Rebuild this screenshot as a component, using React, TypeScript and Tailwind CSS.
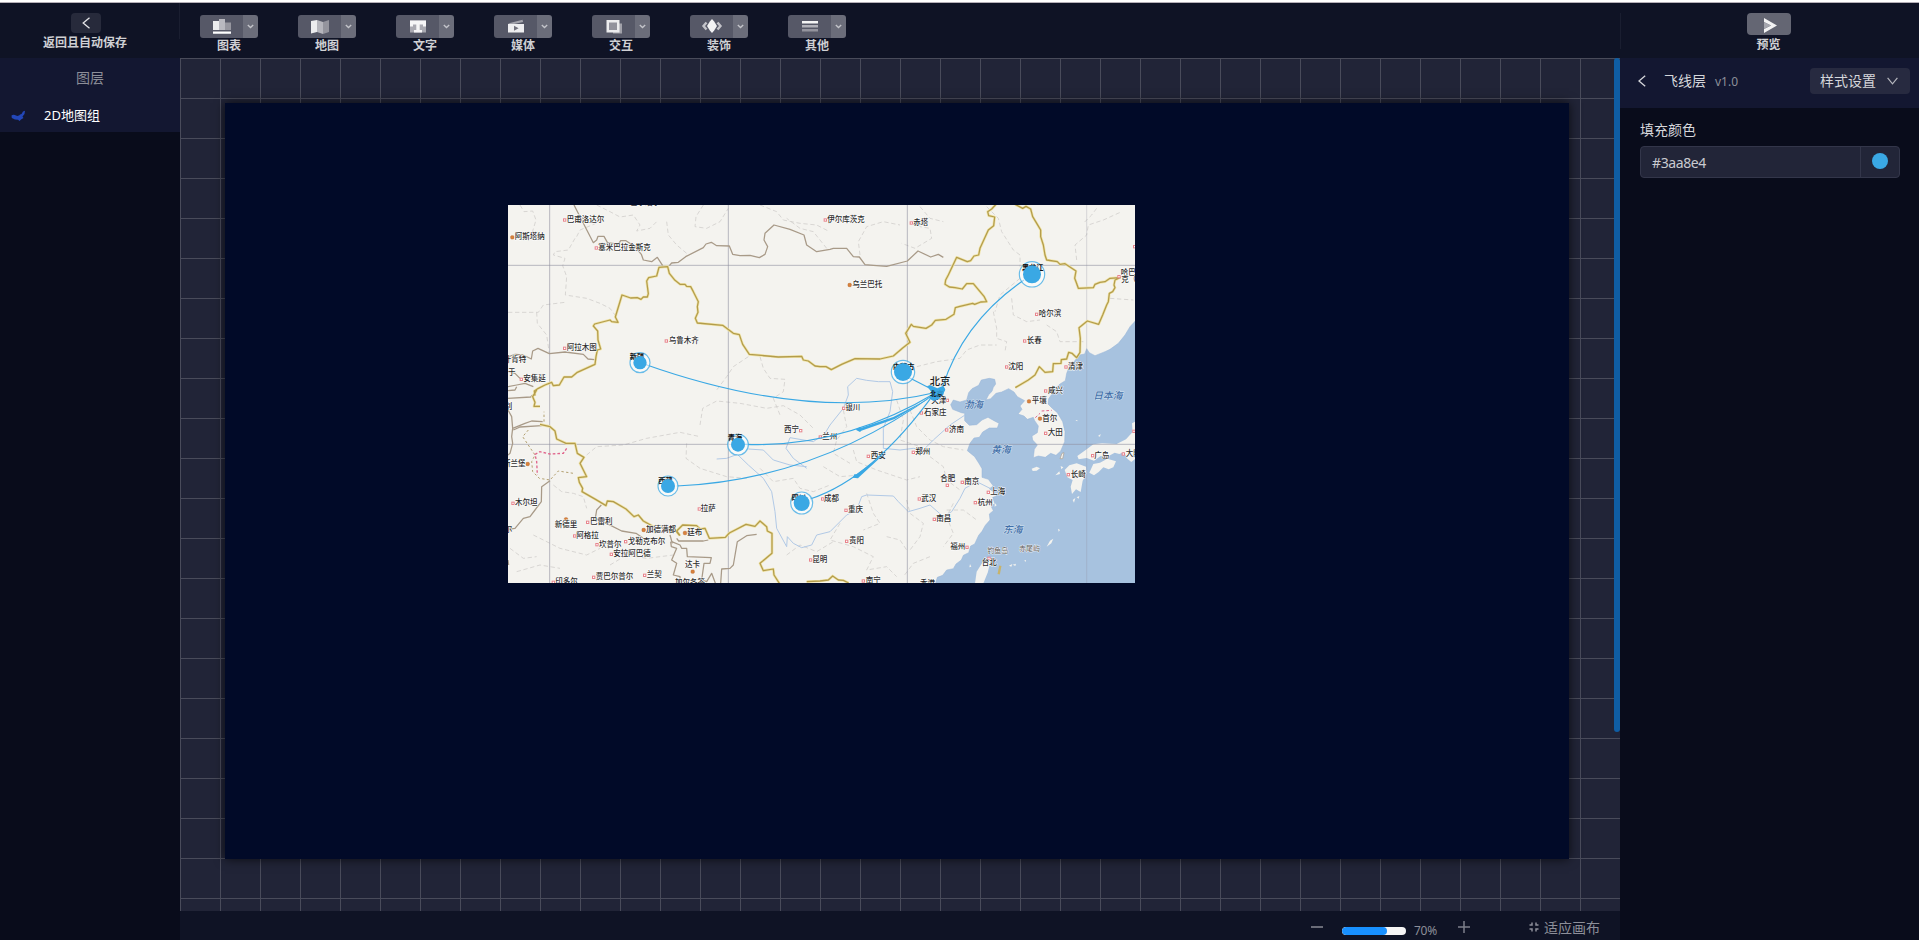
import React from "react";

type Label = [number, number, string];

const ORIGIN_B = "translate(960 0)";
const ORIGIN_C = "translate(0 585)";
const ORIGIN_D = "translate(960 585)";

const CJK = "font-['Noto_Sans','Noto_Sans_CJK_SC',sans-serif]";

const City = ({ x, y, color = "#e8848c", solid = false }: { x: number; y: number; color?: string; solid?: boolean }) =>
  solid ? (
    <rect x={x - 5} y={y - 5} width="10" height="10" rx="3" fill="#d9823c" stroke="#b8662a" strokeWidth="1.5" />
  ) : (
    <rect x={x - 3.5} y={y - 3.5} width="7" height="7" fill="#fff" stroke={color} strokeWidth="3" />
  );

const Labels = ({ items, size = 22.5 }: { items: Label[]; size?: number }) => (
  <g fontSize={size} fill="#2c2c2c" stroke="#ffffff" strokeWidth="3" paintOrder="stroke" strokeLinejoin="round" fontWeight="500">
    {items.map(([x, y, t]) => (
      <text key={t + x} x={x} y={y + 8}>{t}</text>
    ))}
  </g>
);

const Cities = ({ pts }: { pts: [number, number][] }) => (
  <g>{pts.map(([x, y]) => <City key={`${x}-${y}`} x={x} y={y} />)}</g>
);

const Node = ({ x, y, r, ring, name, tx, ty }: { x: number; y: number; r: number; ring: number; name: string; tx: number; ty: number }) => (
  <g>
    <circle cx={x} cy={y} r={ring} fill="#ffffff" fillOpacity=".55" stroke="#3aa8e4" strokeOpacity=".75" strokeWidth="3.5" />
    <text x={tx} y={ty} fontSize="21.5" fontWeight="700" fill="#111" textAnchor="middle">{name}</text>
    <circle cx={x} cy={y} r={r} fill="#3aa8e4" />
  </g>
);

const SEA =
  "M946,-207 L930,-190 915,-165 895,-140 870,-122 855,-115 825,-103 808,-112 800,-124 794,-108 778,-105 762,-85 748,-70 740,-50 736,-28 720,-18 706,-5 696,12 686,26 684,42 698,56 712,68 728,95 735,125 734,155 722,183 708,196 692,190 676,202 655,198 640,203 643,178 652,165 638,150 636,138 652,128 655,108 644,92 640,82 622,88 612,78 594,72 606,58 600,48 614,32 592,20 582,6 566,-4 545,6 528,10 512,26 498,30 506,14 516,4 520,-8 527,-18 524,-32 508,-35 484,-30 476,-14 456,-4 446,8 440,30 420,36 400,30 392,44 398,58 424,68 434,70 434,92 448,106 470,104 486,90 504,82 522,92 537,100 532,114 508,114 488,126 478,142 462,144 450,160 442,182 464,200 478,222 486,236 486,262 505,268 520,288 508,296 524,308 530,318 518,322 524,340 514,350 520,362 508,372 510,390 496,406 486,424 476,436 464,462 452,468 446,488 430,496 424,510 408,522 400,536 380,540 368,556 352,562 346,582 946,582Z";

const ChinaMap = () => (
  <svg className={`block ${CJK}`} width="627" height="378" viewBox="24 30 1881 1134">
    <rect x="0" y="0" width="1960" height="1200" fill="#f4f3ef" />

    <g transform={ORIGIN_D} strokeLinejoin="round">
      <path d={SEA} fill="#a7c2df" stroke="#94b3d6" strokeWidth="1.5" />
      <g fill="#f4f3ef">
        <path d="M946,95 L936,100 938,126 918,148 890,162 846,160 820,163 800,178 772,198 776,208 800,204 822,212 842,198 862,200 884,188 898,192 912,186 922,206 934,216 946,206Z" />
        <path d="M808,248 L820,222 840,218 862,206 888,214 880,232 866,238 850,232 836,246 822,256Z" />
        <path d="M734,240 L748,226 770,220 798,230 799,252 788,272 782,306 768,298 756,312 752,290 758,270 742,262Z" />
        <path d="M510,503 L490,513 470,545 465,580 490,580 503,548 511,516Z" />
        <path d="M635,236 L650,230 660,235 650,242 638,243Z" />
        <path d="M680,470 L690,452 700,446 694,460Z M567,527 L577,522 574,530Z M578,524 L588,521 586,528Z M612,512 l6,-2 0,5z M714,416 l6,4 -4,5z M834,138 l8,-6 -2,8z M766,90 l6,0 0,4z M706,256 l12,-12 2,8z M722,228 l8,4 -6,6z M758,330 l8,-6 -4,14z M770,322 l8,-4 -2,8z M450,522 l4,8 -6,2z M524,338 l6,8 -6,4z" />
        <path d="M720,206 L726,190 732,188 728,206Z" stroke="#a89c8c" strokeWidth="2" />
      </g>
    </g>

    <g fill="none" stroke="#d0cecb" strokeWidth="2.4" strokeDasharray="13 8" strokeLinejoin="round">
      <path d="M60,30 L72,50 98,48 108,75 96,115 M290,30 L330,50 360,66 400,60 420,90 410,108 450,100 470,80 M610,30 L588,65 585,95 620,100 660,80 685,40" />
      <path d="M230,125 L240,105 300,80 M225,130 L205,165 165,170 160,180 195,190 188,212 200,245 196,300 260,310 300,325 330,340 345,360 M24,352 L115,352 130,330 195,322 M110,352 L112,385 140,420 148,475" />
      <path d="M500,80 L505,120 530,150 560,175 M780,30 L830,50 850,75 900,85 950,90 985,108 M745,485 L700,515 680,545 650,585 M780,485 L790,520 810,550 855,553 850,590 820,610 840,660" />
      <path d="M600,690 L608,640 650,618 720,625 800,640 850,632 900,660 940,700 M260,780 L290,755 370,750 440,730 540,712 600,725 M560,745 L558,790 600,820 680,845 740,850" />
      <path d="M160,870 L185,890 220,895 250,905 260,940 M100,1020 L180,1060 260,1080 300,1060 M50,1130 L120,1110 180,1120 M330,1110 L380,1080 440,1090 520,1080 M30,1060 L70,1090 110,1085" />
      <path d="M780,820 L820,860 880,850 900,880 940,890 990,870 M860,1080 L900,1050 950,1070 1000,1040" />
    </g>
    <g transform={ORIGIN_B} fill="none" stroke="#d0cecb" strokeWidth="2.4" strokeDasharray="13 8" strokeLinejoin="round">
      <path d="M120,180 L115,140 140,95 190,80 240,90 M280,75 L300,95 330,100 335,130 285,160 245,145 M300,35 L330,70 370,80 M500,35 L535,70 545,110 580,165 600,180 600,215 M600,250 L540,300 525,350 M575,310 L580,360 620,380 660,375 M520,350 L530,400 530,430 560,440 555,470 M680,390 L710,410 720,440 790,440 M770,195 L765,150 800,120 805,90 850,75 905,50 M870,310 L940,315 M270,520 L350,500 420,490 440,465 480,450 530,450" />
      <path d="M830,40 L815,60 790,85 M20,160 L-20,110 -60,100 -100,70" />
    </g>
    <g transform={ORIGIN_D} fill="none" stroke="#d0cecb" strokeWidth="2.4" strokeDasharray="13 8" strokeLinejoin="round">
      <path d="M70,60 L80,110 50,150 40,190 90,220 M100,180 L110,215 170,240 200,250 260,270 300,260 M230,30 L250,90 240,150 300,170 M270,60 L290,110 330,150 370,170 430,180 M330,200 L370,230 380,270 420,300 M10,230 L60,260 120,255 M260,330 L270,370 310,400 300,440 270,480 M400,340 L380,380 400,430 370,470 M140,310 L160,370 180,400 130,420 M60,400 L30,450 100,470 160,500 140,540 200,530 230,560 M330,500 L280,520 250,560 M200,440 L240,450 260,480 M380,360 L430,360 470,390" />
    </g>

    <g fill="none" stroke="#b1c9e6" strokeWidth="3" strokeLinejoin="round">
      <path d="M650,792 L680,790 712,778 745,810 790,850 815,890 825,950 830,1000 860,1055 862,1025 880,1045 905,1058 935,1050 950,1020 990,1010 1040,960 1070,945 1085,905 1100,900 1180,903 1195,920 1225,950 1260,940 1290,930 1330,965 1355,950 1380,910 1395,880 1430,860 1470,880 1500,900" />
      <path d="M745,762 L790,765 820,795 870,810 920,815 M920,820 L880,790 858,760 870,728 940,740 975,715 990,690 1030,640 1045,600 1043,575 1070,550 1100,556 1135,560 1170,560 1178,590 1170,650 1150,700 1150,760 1200,765 1240,760 1270,765 1300,735 1350,690 1395,660" />
    </g>

    <g stroke="#8f8f9e" strokeOpacity=".6" strokeWidth="3">
      <path d="M149,30V1164M685,30V1164M1222,30V1164M24,211H1905M24,748H1905" />
      <path d="M1760,30V1164" strokeOpacity=".3" />
    </g>

    <g fill="none" stroke="#a89a88" strokeWidth="3.8" strokeLinejoin="round">
      <path d="M222,30 L280,143 290,135 294,124 312,124 322,142 355,148 362,137 378,137 405,155 424,178 430,195 455,200 472,187 488,212 M508,212 L515,204 535,202 557,185 610,158 618,147 634,142 650,152 688,153 698,178 720,182 750,181 778,188 795,178 803,155 792,135 795,115 822,90 870,103 912,120 920,150 950,170 990,163 1000,160 1040,160 1060,185 1078,186 1095,209 1120,211 1160,214 1222,198 1254,168 1292,186 1315,178 1330,187" />
      <path d="M24,486 L45,478 70,480 94,492 98,468 114,460 148,476 195,471 250,478 264,492 284,494 M24,575 L50,570 75,565 100,575 M24,587 L45,585 50,575 M24,610 L92,606 98,600 M24,530 L45,535 60,550" />
      <path d="M24,645 L35,665 38,700 75,685 95,678 128,680 M40,705 L60,696 125,692 M38,700 L35,725 38,745 30,775 24,780 M150,857 L125,875 124,920 105,945 90,965 70,970 45,1000 24,1003 M304,930 L290,945 286,970 320,985 365,1008 408,1015 430,1030 M510,1020 L517,1045 M530,1030 L536,1038 610,1038 625,1035" />
      <path d="M515,1040 L540,1050 545,1060 560,1060 562,1085 634,1088 630,1105 612,1105 605,1155 620,1160 635,1135 650,1175 M512,1040 L514,1055 530,1060 515,1095 530,1105 520,1140 540,1145 540,1170 M770,1018 L740,1022 712,1040 700,1110 690,1120 665,1122 662,1165" />
      <path d="M24,1095 L26,1110" />
    </g>
    <path d="M132,680 V650 M85,705 L68,725 105,780 95,800 98,830 118,850 150,855 175,828 220,835" fill="none" stroke="#b3a070" strokeWidth="3" strokeDasharray="7 7" />
    <path d="M200,760 L190,775 150,777 120,770 105,778 110,800 112,840" fill="none" stroke="#e0668c" strokeWidth="4" strokeDasharray="8 6" />
    <path d="M1606,668 L1620,655 M1625,648 L1655,646" fill="none" stroke="#e0668c" strokeWidth="3" strokeDasharray="8 6" />

    {[{ c: "#f0e4a8", w: 8 }, { c: "#b39c4c", w: 3.8 }].map(({ c, w }) => (
      <g key={c} fill="none" stroke={c} strokeWidth={w} strokeLinejoin="round">
        <path d="M105,602 L103,588 115,580 135,570 155,562 160,572 178,570 192,546 215,546 232,532 285,508 288,485 292,465 302,462 294,435 293,408 280,393 284,387 330,375 335,380 354,382 346,366 366,300 392,309 412,308 423,313 430,306 442,306 445,296 440,258 446,248 470,243 477,217 503,215 508,235 525,256 540,268 555,268 560,274 572,275 580,290 595,320 592,335 594,352 586,370 592,384 668,391 700,415 718,419 728,448 748,478 835,486 905,484 910,495 925,498 945,513 960,515 978,515 994,524 1025,508 1065,491 1140,492 1180,483 1208,459 1230,442 1217,415 1234,388 1240,394 1278,400 1295,390 1306,376 1338,373 1362,358 1366,338 1380,334 1418,325 1424,328 1442,321 1460,320 1452,304 1420,266 1400,266 1387,282 1365,278 1348,276 1335,268 1337,255 1345,240 1370,187 1402,200 1412,197 1422,183 1436,180 1440,160 1465,105 1481,92 1484,66 1466,62 1463,50 1475,42 1488,28" />
        <path d="M1545,28 L1568,40 1578,34 1592,42 1598,65 1612,88 1622,105 1622,125 1630,150 1635,180 1640,195 1672,200 1680,208 1695,206 1728,228 1724,250 1728,260 1735,280 1780,278 1785,268 1800,262 1815,260 1830,250 1860,248 1845,255 1842,270 1845,278 1838,290 1828,295 1825,320 1820,330 1808,360 1796,388 1762,378 1737,398 1741,430 1740,472 1730,488 1716,475 1706,472 1700,492 1684,494 1683,505 1660,506 1658,530 1635,532 1618,515 1605,540 1585,555 1546,578" />
        <path d="M110,585 L98,605 105,622 102,634 120,634 M120,688 L150,695 165,708 170,732 198,745 225,745 232,775 252,787 240,805 260,845 235,848 238,862 248,880 246,890 288,914 318,932 322,918 340,920 378,942 402,965 415,960 430,978 460,995 500,998 522,1000 538,1020" />
        <path d="M540,1022 L530,1008 548,990 590,992 600,1002 615,1000 628,1030 676,1027 688,1014 738,988 765,994 780,978 800,995 802,1008 816,1015 816,1075 780,1105 790,1127 820,1122 822,1140 838,1165" />
        <path d="M920,1160 L960,1158 985,1155 998,1143 1015,1155 1030,1156 1046,1164" />
      </g>
    ))}
    <path d="M1496,1138 L1501,1112" stroke="#c7b36b" strokeWidth="7" />

    <Cities pts={[[194, 75], [289, 159], [194, 460], [499, 438], [64, 553]]} />
    <City x={37} y={127} solid />
    <Labels items={[[200, 73, "巴甫洛达尔"], [44, 125, "阿斯塔纳"], [295, 157, "塞米巴拉金斯克"], [200, 457, "阿拉木图"], [506, 436, "乌鲁木齐"], [11, 492, "什肯特"], [24, 533, "于"], [70, 551, "安集延"], [390, 22, "巴尔瑙尔"]]} />

    <g transform={ORIGIN_B}>
      <Cities pts={[[16, 75], [274, 84], [650, 358], [614, 438], [560, 516], [738, 516], [897, 245], [677, 588], [944, 155]]} />
      <City x={89} y={270} solid />
      <Labels items={[[22, 73, "伊尔库茨克"], [280, 82, "赤塔"], [97, 268, "乌兰巴托"], [656, 356, "哈尔滨"], [620, 436, "长春"], [565, 514, "沈阳"], [744, 514, "清津"], [902, 231, "哈巴"], [904, 254, "克（"], [684, 585, "咸兴"]]} />
    </g>

    <g transform={ORIGIN_C}>
      <Cities pts={[[902, 122], [961, 141], [39, 340], [263, 397], [224, 438], [291, 464], [377, 455], [334, 493], [281, 562], [434, 556], [598, 357], [968, 327], [932, 510], [160, 577]]} />
      <City x={83} y={222} solid />
      <City x={198} y={388} solid />
      <City x={431} y={420} solid />
      <City x={555} y={429} solid />
      <City x={578} y={545} solid />
      <Labels items={[[852, 119, "西宁"], [14, 48, "别"], [9, 219, "斯兰堡"], [45, 337, "木尔坦"], [164, 403, "新德里"], [270, 394, "巴雷利"], [229, 436, "阿格拉"], [297, 462, "坎普尔"], [383, 453, "戈勒克布尔"], [340, 491, "安拉阿巴德"], [438, 418, "加德满都"], [562, 427, "廷布"], [555, 524, "达卡"], [287, 560, "贾巴尔普尔"], [440, 554, "兰契"], [166, 574, "印多尔"], [525, 577, "加尔各答"], [602, 355, "拉萨"], [937, 508, "昆明"], [14, 418, "尔"]]} />
    </g>

    <g transform={ORIGIN_D}>
      <Cities pts={[[71, 55], [382, 31], [304, 69], [380, 120], [145, 199], [280, 187], [382, 286], [427, 277], [505, 307], [466, 338], [298, 327], [78, 361], [343, 388], [80, 454], [441, 472], [130, 573], [507, 505], [677, 130], [818, 197], [910, 192], [745, 254], [942, 124]]} />
      <City x={627} y={34} solid />
      <City x={660} y={86} solid />
      <Labels items={[[76, 52, "银川"], [334, 30, "天津"], [312, 68, "石家庄"], [387, 117, "济南"], [7, 138, "兰州"], [152, 197, "西安"], [286, 184, "郑州"], [361, 266, "合肥"], [433, 275, "南京"], [511, 305, "上海"], [473, 336, "杭州"], [304, 325, "武汉"], [12, 325, "成都"], [84, 359, "重庆"], [349, 386, "南昌"], [87, 451, "贵阳"], [391, 470, "福州"], [137, 570, "南宁"], [300, 580, "香港"], [485, 518, "台北"], [635, 31, "平壤"], [667, 84, "首尔"], [683, 128, "大田"], [823, 195, "广岛"], [917, 190, "大阪"], [752, 252, "长崎"]]} />
      <g fill="#555" stroke="#fff" strokeWidth="2" paintOrder="stroke" fontSize="21">
        <text x="502" y="488">钓鱼岛</text>
        <text x="597" y="484">赤尾屿</text>
      </g>
      <g fill="#3f6fa9" stroke="#d5e2f0" strokeWidth="2.5" paintOrder="stroke" fontSize="29" fontStyle="italic" fontWeight="500">
        <text x="431" y="53">渤海</text>
        <text x="514" y="188">黄海</text>
        <text x="549" y="428">东海</text>
        <text x="820" y="27">日本海</text>
      </g>
    </g>

    <g fill="none" stroke="#3aa8e4" strokeWidth="3.3">
      <path d="M430,506 Q930,684 1310,592" />
      <path d="M735,748 Q1030,760 1310,592" />
      <path d="M530,873 Q950,855 1310,592" />
      <path d="M930,912 Q1120,850 1305,592" />
      <path d="M1572,255 Q1390,380 1328,575" />
      <path d="M1228,548 L1310,590" />
    </g>
    <g fill="#3aa8e4">
      <path d="M1067,704 L1080,696 1082,699 1180,666 1292,608 1184,672 1084,707 1080,711Z" />
      <path d="M1058,848 L1063,838 1070,838 1155,775 1080,844 1074,850Z" />
    </g>
    <text x="1289" y="569" fontSize="31" fill="#1c1c1c" fontWeight="500">北京</text>
    <path d="M1281,574 L1290,570 1312,580 1330,572 1336,584 1328,600 1316,612 1300,618 1288,610 1296,598 1292,588Z" fill="#3aa8e4" />
    <text x="1290" y="603" fontSize="20" fill="#111" fontWeight="700">北京</text>
    <path d="M1300,584 L1334,578 1330,600 1308,594Z" fill="#3aa8e4" opacity=".85" />

    <Node x={420} y={503} r={20} ring={30} name="新疆" tx={411} ty={493} />
    <Node x={1596} y={238} r={27} ring={38} name="黑龙江" tx={1598} ty={226} />
    <Node x={1209} y={531} r={27} ring={35} name="内蒙古" tx={1211} ty={522} />
    <Node x={714} y={749} r={21} ring={31} name="青海" tx={705} ty={736} />
    <Node x={504} y={873} r={21} ring={30} name="西藏" tx={496} ty={864} />
    <Node x={905} y={924} r={24} ring={33} name="四川" tx={896} ty={915} />
  </svg>
);

const toolIcons: Record<string, React.ReactNode> = {
  图表: (
    <g>
      <path d="M0 2h6v9H0z" fill="#ececee" />
      <path d="M6 0h6v11H6z" fill="#b9b9c0" />
      <path d="M12 3.500h6v7.500h-6z" fill="#96969f" />
      <path d="M0 12.500h18v2.200H0z" fill="#fff" />
    </g>
  ),
  地图: (
    <g>
      <path d="M0 2l6-1v12l-6 1.500z" fill="#ececee" />
      <path d="M6 1l6 2v12l-6-2z" fill="#b5b5bc" />
      <path d="M12 3l6-2v12l-6 2z" fill="#94949d" />
    </g>
  ),
  文字: (
    <g>
      <path d="M1 1.500h16v12H1z" fill="#a9a9b1" />
      <path d="M1 1.500h16v6h-3V5.500h-3.300v5.500H13v2.500H5V11h2.300V5.500H4v2H1z" fill="#f6f6f7" />
    </g>
  ),
  媒体: (
    <g>
      <path d="M1 4.500L15.500.8l.6 2.200L5 5.500z" fill="#a5a5ad" />
      <path d="M1 5h16V13.500H1z" fill="#eeeef0" />
      <path d="M7 6.800l4.600 2.500L7 11.800z" fill="#73737e" />
    </g>
  ),
  交互: (
    <g>
      <path d="M8 4.500h9V14.500H8z" fill="#a2a2aa" />
      <path d="M1.500 1h13v12.500h-13z" fill="#ececee" />
      <path d="M4 3.500h8v7.500H4z" fill="#92929c" />
    </g>
  ),
  装饰: (
    <g>
      <path d="M3.500 3.500L.5 7l3 3.500M14.500 3.500l3 3.500-3 3.500" fill="none" stroke="#c3c3c9" strokeWidth="2.400" />
      <path d="M9 0l2.200 2.500L14 7l-2.800 4.500L9 14l-2.200-2.500L4 7l2.800-4.500z" fill="#f2f2f3" />
    </g>
  ),
  其他: (
    <g>
      <path d="M1 2h16v2.500H1z" fill="#f4f4f5" />
      <path d="M1 6h16v2.500H1z" fill="#b0b0b8" />
      <path d="M1 10h16v2.500H1z" fill="#93939d" />
    </g>
  ),
};

const ToolButton = ({ name }: { name: string }) => (
  <div className="flex w-[58px] flex-col items-center">
    <div className="flex h-[23px] w-full overflow-hidden rounded-[3px]">
      <div className="flex w-[43px] items-center justify-center bg-[#565867]">
        <svg width="18" height="15" viewBox="0 0 18 15" className={name === "装饰" ? "w-5 overflow-visible" : "overflow-visible"}>{toolIcons[name]}</svg>
      </div>
      <div className="flex w-[15px] items-center justify-center bg-[#6b6d7a]">
        <svg width="7" height="5" viewBox="0 0 7 5" fill="none" stroke="#c3c4ca" strokeWidth="1.400"><path d="M.8 1l2.700 2.500L6.200 1" /></svg>
      </div>
    </div>
    <span className="mt-px text-xs font-bold leading-[14px] text-[#cfd0d4]">{name}</span>
  </div>
);

const Header = () => (
  <header className="flex h-[55px] shrink-0 bg-[#0f1325]">
    <div className="flex w-[179px] shrink-0 flex-col items-center pr-[7px] pt-[10px]">
      <button className="flex h-5 w-[30px] items-center justify-center rounded-sm bg-[#272a3b]">
        <svg width="8" height="12" viewBox="0 0 8 12" fill="none" stroke="#e4e4e7" strokeWidth="1.300"><path d="M7.500.8L1.200 6l6.300 5.200" /></svg>
      </button>
      <span className="mr-0.5 mt-[3px] text-xs font-bold leading-[14px] text-[#cfd0d4]">返回且自动保存</span>
    </div>
    <div className="h-9 w-px bg-[#1a1e30]" />
    <nav className="flex flex-1 gap-10 pl-5 pt-3">
      {Object.keys(toolIcons).map((n) => <ToolButton key={n} name={n} />)}
    </nav>
    <div className="mt-[10px] h-9 w-px bg-[#1a1e30]" />
    <div className="flex w-[298px] shrink-0 flex-col items-center pr-[3px] pt-[10px]">
      <button className="flex h-[22px] w-11 items-center justify-center rounded-sm bg-[#646673]">
        <svg width="14" height="15" viewBox="0 0 14 15" className="mt-0.5 ml-0.5"><path d="M1 0l13 7.500L1 15v-4l7-3.500L1 4z" fill="#f2f2f3" /><path d="M1 4l7 3.500L1 11z" fill="#a5a6ae" /></svg>
      </button>
      <span className="mt-[3px] text-xs font-bold leading-[14px] text-[#cfd0d4]">预览</span>
    </div>
  </header>
);

const LayerPanel = () => (
  <aside className="w-[180px] shrink-0">
    <div className="flex h-10 items-center justify-center bg-[#131731] text-sm text-[#8d8f99]">图层</div>
    <div className="flex h-[34px] items-center bg-[#131731] pl-[11px] pt-0.5 text-[13px] text-white">
      <svg width="15" height="12" viewBox="0 0 15 12" className="mr-[18px]">
        <path d="M.5 5.500C1.500 4.500 3.500 4.200 5 5.500c1.200.8 2.800.6 4-1L10.500 4l1.500-2.500L14 .8l-.5 3.200-2 2.500 1 1.500L10 9.500 8.500 11 7 9.800 4 9.500.8 8z" fill="#2347b8" />
      </svg>
      2D地图组
    </div>
  </aside>
);

const GRID =
  "bg-[linear-gradient(to_right,#494b5a_1px,transparent_1px),linear-gradient(to_bottom,#494b5a_1px,transparent_1px)] bg-[size:40px_40px]";

const Workspace = () => (
  <main className="flex w-[1440px] shrink-0 flex-col">
    <div className={`flex h-[853px] bg-[#212437] ${GRID}`}>
      <div className="ml-[45px] mt-[45px] h-[756px] w-[1344px] bg-[#010a28] pl-[283px] pt-[102px] shadow-[0_0_10px_0_rgba(0,0,0,0.7)]">
        <ChinaMap />
      </div>
      <div className="ml-auto h-[674px] w-1.5 rounded-full bg-[#0f5da3]" />
    </div>
    <div className="flex h-[29px] items-center justify-end bg-[#0f1325] pr-5 pb-[3px] pt-2 text-[#8d8f99]">
      <div className="mb-[3px] h-0.5 w-3 bg-[#6a6c78]" />
      <div className="ml-[19px] mt-[5px] h-2 w-16 overflow-hidden rounded-full bg-[#f5f5f5]">
        <div className="h-full w-[45px] rounded-full bg-[#1890ff]" />
      </div>
      <span className="ml-2 mt-[6px] w-11 text-xs leading-4 tracking-[-0.3px]">70%</span>
      <svg width="12" height="12" viewBox="0 0 12 12" className="mb-[3px]" stroke="#7d7f8a" strokeWidth="1.500"><path d="M0 6h12M6 0v12" /></svg>
      <svg width="10" height="10" viewBox="0 0 10 10" className="mb-[3px] ml-[59px]" fill="none" stroke="#8d8f99" strokeWidth="1.500"><path d="M.5 3H3V.5M7 .5V3h2.500M9.500 7H7v2.500M3 9.500V7H.5" /></svg>
      <span className="mb-px ml-[5px] text-sm leading-5">适应画布</span>
    </div>
  </main>
);

const SettingsPanel = () => (
  <aside className="flex-1 text-[#d6d7db]">
    <div className="flex h-[50px] items-center bg-[#131731] pb-1 pl-[18px] pr-[9px]">
      <svg width="8" height="12" viewBox="0 0 8 12" fill="none" stroke="#d6d7db" strokeWidth="1.300"><path d="M7.200.8L1 6l6.200 5.200" /></svg>
      <span className="ml-[18px] text-sm">飞线层</span>
      <span className="ml-[9px] mt-0.5 text-xs text-[#8d8f99]">v1.0</span>
      <button className="ml-auto mr-px flex h-[26px] w-[100px] items-center rounded-sm bg-[#272a40] pl-[10px] text-sm">
        样式设置
        <svg width="11" height="8" viewBox="0 0 11 8" className="ml-[11px]" fill="none" stroke="#b5b6bd" strokeWidth="1.200"><path d="M.6.8l4.900 6 4.900-6" /></svg>
      </button>
    </div>
    <div className="px-5 pt-3">
      <div className="text-sm leading-5">填充颜色</div>
      <div className="mt-[6px] flex h-8 w-[260px] rounded-sm border border-[#33364a] bg-[#222538]">
        <div className="flex flex-1 items-center pl-[11px] pt-0.5 text-sm tracking-[-0.4px] text-[#c9cad0]">#3aa8e4</div>
        <div className="flex w-[39px] justify-center border-l border-[#33364a] pt-[6px]">
          <div className="size-4 rounded-full bg-[#3aa8e4]" />
        </div>
      </div>
    </div>
  </aside>
);

export default function App() {
  return (
    <div className={`flex h-[940px] w-[1919px] flex-col overflow-hidden bg-[#090c1b] ${CJK}`}>
      <div className="h-[3px] shrink-0 border-b border-[#b5b0b8] bg-white" />
      <Header />
      <div className="flex flex-1">
        <LayerPanel />
        <Workspace />
        <SettingsPanel />
      </div>
    </div>
  );
}
